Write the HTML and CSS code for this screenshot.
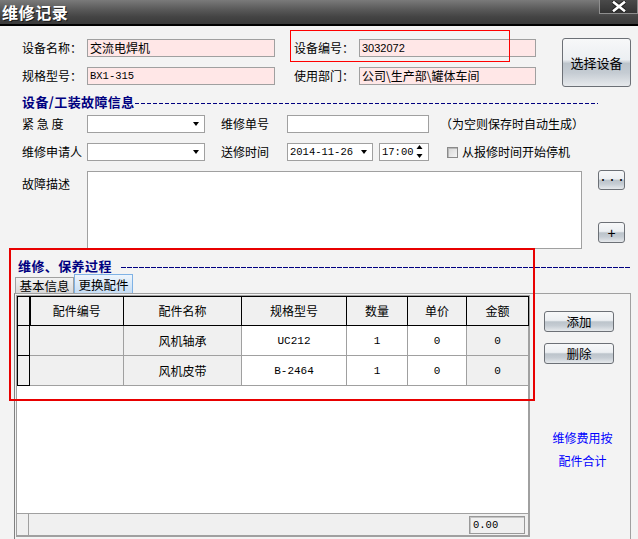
FILE: index.html
```html
<!DOCTYPE html>
<html lang="zh">
<head>
<meta charset="utf-8">
<title>维修记录</title>
<link rel="stylesheet" href="styles.css">
</head>
<body>
<div class="window">
  <div class="titlebar">
    <span class="title">维修记录</span>
    <span class="close"><svg width="14" height="11" viewBox="0 0 14 11"><path d="M2 1.5 L12 9.5 M12 1.5 L2 9.5" stroke="#1e1e1e" stroke-width="4.5" stroke-linecap="square"/><path d="M2 1.5 L12 9.5 M12 1.5 L2 9.5" stroke="#ffffff" stroke-width="2.6" stroke-linecap="square"/></svg></span>
  </div>

  <div class="top">
    <div class="topfields">
      <div class="row">
        <span class="lbl">设备名称：</span><span class="inp pink w188">交流电焊机</span>
        <span class="lbl lbl2">设备编号：</span><span class="inp pink w177 sans">3032072</span>
      </div>
      <div class="row">
        <span class="lbl">规格型号：</span><span class="inp pink w188 mono m11">BX1-315</span>
        <span class="lbl lbl2">使用部门：</span><span class="inp pink w177">公司\生产部\罐体车间</span>
      </div>
    </div>
    <div class="btn btn-big">选择设备</div>
  </div>

  <div class="sect sect1"><span class="sect-title">设备/工装故障信息</span><i class="dash"></i></div>

  <div class="row row3">
    <span class="lbl">紧&nbsp;急&nbsp;度</span>
    <span class="inp sel w118"><i class="arrow"></i></span>
    <span class="lbl lbl3">维修单号</span>
    <span class="inp w142"></span>
    <span class="note">（为空则保存时自动生成）</span>
  </div>

  <div class="row row4">
    <span class="lbl">维修申请人</span>
    <span class="inp sel w118"><i class="arrow"></i></span>
    <span class="lbl lbl3">送修时间</span>
    <span class="inp sel w86 mono m11">2014-11-26<i class="arrow"></i></span>
    <span class="inp sel w50 mono m11 time">17:00<svg class="spin" width="7" height="14" viewBox="0 0 7 14"><path d="M3.5 0 L6.5 4 L0.5 4 Z M0.5 9 L6.5 9 L3.5 13 Z" fill="#000"/></svg></span>
    <span class="chk"></span>
    <span class="chklbl">从报修时间开始停机</span>
  </div>

  <div class="row5">
    <span class="lbl lbl5">故障描述</span>
    <div class="textarea"></div>
    <div class="sidebtns">
      <div class="btn btn-dots">· · ·</div>
      <div class="btn btn-plus">+</div>
    </div>
  </div>

  <div class="sect sect2"><span class="sect-title">维修、保养过程</span><i class="dash dash2"></i></div>

  <div class="tabs">
    <div class="tab">基本信息</div>
    <div class="tab active">更换配件</div>
  </div>

  <div class="panel">
    <div class="grid">
      <div class="gridbody">
        <table class="tbl">
          <colgroup>
            <col class="c0"><col class="c1"><col class="c2"><col class="c3"><col class="c4"><col class="c5"><col class="c6">
          </colgroup>
          <thead>
            <tr><th class="ind"></th><th>配件编号</th><th>配件名称</th><th>规格型号</th><th>数量</th><th>单价</th><th>金额</th></tr>
          </thead>
          <tbody>
            <tr><td class="ind"></td><td class="g"></td><td class="g">风机轴承</td><td class="mono">UC212</td><td class="mono">1</td><td class="mono">0</td><td class="g mono">0</td></tr>
            <tr><td class="ind"></td><td class="g"></td><td class="g">风机皮带</td><td class="mono">B-2464</td><td class="mono">1</td><td class="mono">0</td><td class="g mono">0</td></tr>
          </tbody>
        </table>
      </div>
      <div class="gridfoot">
        <span class="footind"></span>
        <span class="total mono m11">0.00</span>
      </div>
    </div>
    <div class="side">
      <div class="btn btn-sm">添加</div>
      <div class="btn btn-sm btn-sm2">删除</div>
      <div class="bluenote">维修费用按<br>配件合计</div>
    </div>
  </div>

  <div class="mark mark1"></div>
  <div class="mark mark2"></div>
</div>
</body>
</html>
```

FILE: styles.css
```css
* { box-sizing: border-box; margin: 0; padding: 0; }
html, body { width: 638px; height: 539px; overflow: hidden; }
body {
  margin: 0;
  background: #f3f3f3;
  font-family: "Noto Sans CJK SC", "Noto Sans", sans-serif;
  font-size: 12px;
  line-height: 16px;
  color: #000;
}
.window { position: relative; width: 638px; height: 539px; background: #f3f3f3; overflow: hidden; }

.titlebar {
  height: 26px;
  background: linear-gradient(#7a7a7a 0%, #595959 40%, #444 70%, #3a3a3a 100%);
  border-bottom: 2px solid #000;
  display: flex;
  justify-content: space-between;
  align-items: flex-start;
}
.title {
  color: #fff;
  font-weight: bold;
  font-size: 16px;
  line-height: 24px;
  padding-left: 2px;
  letter-spacing: 0.6px;
  text-shadow: 1px 1px 0 #1a1a1a;
}
.close {
  width: 39px;
  height: 15px;
  margin-top: -1px;
  border: 1px solid #8e8e8e;
  background: linear-gradient(#4a4a4a, #333);
  display: flex;
  align-items: center;
  justify-content: center;
}

.top { display: flex; padding: 12px 0 0 22px; }
.topfields { padding-top: 1px; display: flex; flex-direction: column; gap: 10px; }
.row { display: flex; align-items: center; height: 18px; }
.lbl { width: 65px; flex: none; line-height: 18px; white-space: nowrap; }
.lbl2 { margin-left: 19px; }
.inp {
  flex: none;
  height: 18px;
  border: 1px solid #a0a0a0;
  background: #fff;
  line-height: 16px;
  padding-left: 2px;
  white-space: nowrap;
  overflow: hidden;
}
.pink { background: #ffe7e7; }
.w188 { width: 188px; }
.w177 { width: 177px; }
.w118 { width: 118px; }
.w142 { width: 142px; }
.w86 { width: 86px; }
.w50 { width: 50px; }
.mono { font-family: "Liberation Mono", "DejaVu Sans Mono", monospace; font-size: 10px; }
.m11 { font-size: 10.5px; }
.sans { font-family: "Liberation Sans", Arial, sans-serif; font-size: 11px; }

.btn {
  border: 1px solid #6c7076;
  border-radius: 3px;
  background: linear-gradient(#f7f8f9 0%, #eceff2 44%, #bcc4cb 52%, #c5ccd3 72%, #e6e9ec 100%);
  display: flex;
  align-items: center;
  justify-content: center;
  white-space: nowrap;
}
.btn-big { margin-left: 26px; width: 69px; height: 49px; font-size: 13px; }

.sect { display: flex; align-items: center; height: 16px; }
.sect-title { font-weight: bold; font-size: 13px; line-height: 16px; color: #000080; letter-spacing: 0.4px; white-space: nowrap; }
.sect1 { margin-top: 7px; padding-left: 22px; width: 598px; }
.dash {
  flex: 1;
  height: 1px;
  margin-top: 2px;
  background: repeating-linear-gradient(90deg, #000080 0 4px, transparent 4px 6px);
}
.sect2 { margin-top: 9px; padding-left: 18px; width: 630px; }
.dash2 {
  margin-left: 9px;
  background: repeating-linear-gradient(90deg, #000080 0 5px, transparent 5px 6px);
}

.row3 { margin-top: 5px; padding-left: 22px; }
.row4 { margin-top: 10px; padding-left: 22px; }
.lbl3 { margin-left: 16px; width: 66px; }
.note { margin-left: 11px; white-space: nowrap; line-height: 18px; }
.sel { display: flex; align-items: center; }
.arrow {
  margin-left: auto;
  margin-right: 5px;
  width: 0; height: 0;
  border-left: 3.5px solid transparent;
  border-right: 3.5px solid transparent;
  border-top: 4px solid #000;
}
.time { margin-left: 6px; }
.spin { margin-left: auto; margin-right: 5px; }
.chk {
  margin-left: 18px;
  width: 11px; height: 11px;
  border: 1px solid #8a8a8a;
  background: linear-gradient(135deg, #d6d6d6, #f4f4f4);
  box-shadow: inset 1px 1px 0 #b8b8b8;
}
.chklbl { margin-left: 4px; white-space: nowrap; line-height: 18px; }

.row5 { display: flex; margin-top: 10px; padding-left: 22px; height: 78px; }
.lbl5 { padding-top: 4px; }
.textarea { width: 495px; height: 78px; border: 1px solid #a0a0a0; background: #fff; }
.sidebtns { margin-left: 16px; display: flex; flex-direction: column; }
.btn-dots { margin-top: -1px; width: 27px; height: 20px; font-size: 9px; letter-spacing: -1px; }
.btn-plus { margin-top: 32px; width: 27px; height: 21px; font-size: 14px; font-family: "Liberation Sans", Arial, sans-serif; }

.tabs { display: flex; align-items: flex-end; height: 19px; padding-left: 15px; }
.tab {
  width: 59px;
  height: 16px;
  border: 1px solid #a0a0a0;
  border-bottom: none;
  background: linear-gradient(#f2f2f2, #d9d9d9);
  text-align: center;
  line-height: 15px;
  font-size: 12.5px;
}
.tab.active {
  height: 19px;
  border-color: #7fb2e5;
  background: linear-gradient(#eef5fc, #c6ddf4);
  line-height: 19px;
}

.panel {
  margin-left: 14px;
  width: 617px;
  height: 246px;
  border-top: 1px solid #a0a0a0;
  border-left: 1px solid #808080;
  border-right: 1px solid #a0a0a0;
  display: flex;
}
.grid {
  margin-left: 1px;
  margin-top: 1px;
  width: 514px;
  height: 242px;
  border-top: 1px solid #a0a0a0;
  border-left: 1px solid #a0a0a0;
  border-right: 2px solid #a0a0a0;
  border-bottom: 2px solid #a0a0a0;
  display: flex;
  flex-direction: column;
}
.gridbody { flex: 1; background: #fff; }
.tbl { border-collapse: collapse; table-layout: fixed; width: 511px; }
.c0 { width: 12px; } .c1 { width: 94px; } .c2 { width: 118px; } .c3 { width: 105px; }
.c4 { width: 61px; } .c5 { width: 59px; } .c6 { width: 62px; }
.tbl th {
  height: 29px;
  border: 1px solid #000;
  background: #f0f0f0;
  font-weight: normal;
  text-align: center;
  padding: 0;
}
.tbl th.ind { border-right: 2px solid #000; }
.tbl td {
  height: 30px;
  border: 1px solid #a0a0a0;
  text-align: center;
  padding: 0;
  background: #fff;
}
.tbl td.ind { border: 1px solid #000; background: #f0f0f0; }
.tbl td.g { background: #f0f0f0; }
.tbl td.mono { font-size: 11px; }

.gridfoot {
  height: 22px;
  border-top: 1px solid #a0a0a0;
  background: #f0f0f0;
  display: flex;
  align-items: center;
}
.footind { align-self: stretch; width: 12px; border-right: 1px solid #a0a0a0; }
.total {
  margin-left: auto;
  margin-right: 3px;
  width: 56px;
  height: 18px;
  border: 1px solid #999;
  box-shadow: inset 1px 1px 0 #c4c4c4;
  line-height: 16px;
  padding-left: 3px;
}

.side { width: 100px; padding-top: 17px; }
.btn-sm { margin-left: 14px; width: 70px; height: 21px; font-size: 12.5px; }
.btn-sm2 { margin-top: 11px; }
.bluenote {
  margin-top: 62px;
  padding-left: 5px;
  text-align: center;
  color: #0000ff;
  line-height: 23px;
}

.mark { position: absolute; border-style: solid; border-color: #ff0000; pointer-events: none; }
.mark1 { left: 290px; top: 30px; width: 220px; height: 32px; border-width: 1px; }
.mark2 { left: 9px; top: 248px; width: 526px; height: 153px; border-width: 2px; border-color: #e80000; }
```
